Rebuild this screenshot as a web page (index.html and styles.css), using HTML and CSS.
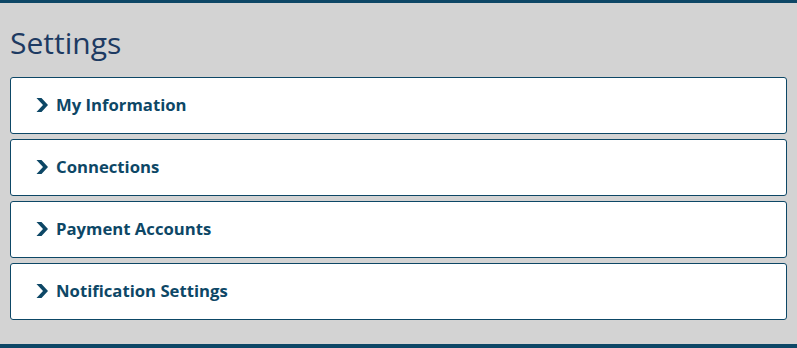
FILE: index.html
```html
<!DOCTYPE html>
<html>
<head>
<meta charset="utf-8">
<link rel="stylesheet" href="styles.css">
</head>
<body>
<div class="page">
  <h1 class="title">Settings</h1>
  <div class="list">
    <div class="item"><svg class="chev" viewBox="0 0 12 14"><path d="M0.5 0 L5.5 0 L12 7 L5.5 14 L0.5 14 L7 7 Z" /></svg><span class="label">My Information</span></div>
    <div class="item"><svg class="chev" viewBox="0 0 12 14"><path d="M0.5 0 L5.5 0 L12 7 L5.5 14 L0.5 14 L7 7 Z" /></svg><span class="label">Connections</span></div>
    <div class="item"><svg class="chev" viewBox="0 0 12 14"><path d="M0.5 0 L5.5 0 L12 7 L5.5 14 L0.5 14 L7 7 Z" /></svg><span class="label">Payment Accounts</span></div>
    <div class="item"><svg class="chev" viewBox="0 0 12 14"><path d="M0.5 0 L5.5 0 L12 7 L5.5 14 L0.5 14 L7 7 Z" /></svg><span class="label">Notification Settings</span></div>
  </div>
</div>
</body>
</html>
```
FILE: styles.css
```css
html, body {
  margin: 0;
  padding: 0;
  height: 100%;
}
body {
  background: #d3d3d3;
  font-family: "Open Sans", "Liberation Sans", sans-serif;
}
.page {
  box-sizing: border-box;
  height: 348px;
  border-top: 3px solid #0d4766;
  border-bottom: 4px solid #0d4766;
  padding: 0 10px;
}
.title {
  margin: 0;
  padding-top: 24px;
  height: 74px;
  box-sizing: border-box;
  font-size: 30px;
  line-height: 32px;
  font-weight: 400;
  color: #1d3a62;
}
.list {
  display: flex;
  flex-direction: column;
  gap: 5px;
}
.item {
  box-sizing: border-box;
  height: 57px;
  background: #fff;
  border: 1px solid #0d4766;
  border-radius: 3px;
  display: flex;
  align-items: center;
  padding-left: 25px;
  padding-bottom: 2px;
}
.chev {
  width: 12px;
  height: 14px;
  margin-right: 8px;
  fill: #0d4766;
}
.label {
  font-size: 16.7px;
  font-weight: 700;
  color: #0d4766;
}
```
